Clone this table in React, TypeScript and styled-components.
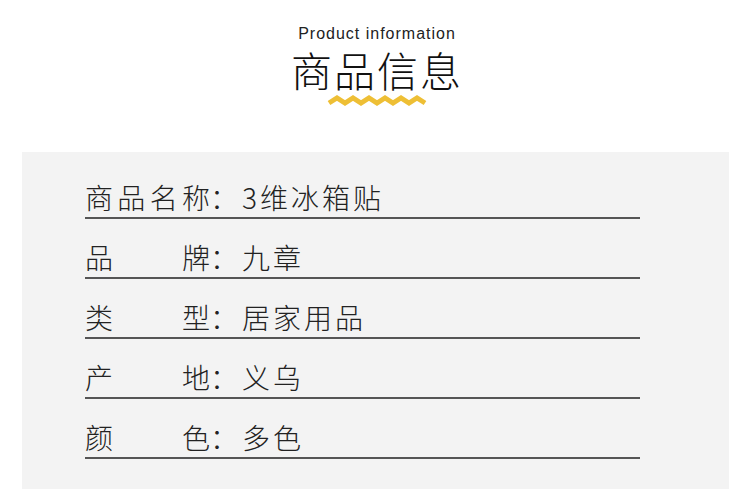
import React from "react";
import styled, { createGlobalStyle } from "styled-components";

const Global = createGlobalStyle`
  html, body { margin: 0; padding: 0; background: #fff; }
  body { font-family: "Noto Sans CJK SC", "Noto Sans", sans-serif; color: #222; }
`;

const Page = styled.div`
  width: 750px;
  height: 502px;
  overflow: hidden;
  display: flex;
  flex-direction: column;
`;

const Header = styled.header`
  display: flex;
  flex-direction: column;
  align-items: center;
  padding-top: 25px;
  padding-left: 4px;
  height: 152px;
  flex-shrink: 0;
  box-sizing: border-box;
`;

const Subtitle = styled.div`
  font-family: "Liberation Sans", Arial, sans-serif;
  font-size: 16px;
  letter-spacing: 1px;
  line-height: 18px;
  color: #222;
`;

const Title = styled.h1`
  margin: 4px 0 0;
  font-family: "Noto Sans CJK SC", sans-serif;
  font-weight: 300;
  font-size: 41px;
  line-height: 44px;
  letter-spacing: 2px;
  color: #111;
`;

const Zigzag = styled.svg`
  display: block;
  margin-top: 4px;
`;

const Panel = styled.section`
  margin: 0 21px 0 22px;
  height: 337px;
  background: #f3f3f3;
  padding: 7px 0 0 63px;
  box-sizing: border-box;
`;

const Row = styled.div`
  width: 555px;
  height: 60px;
  box-sizing: border-box;
  padding: 24px 0 6px;
  border-bottom: 2px solid #555;
  display: flex;
  align-items: flex-end;
  font-size: 28px;
  line-height: 28px;
  font-weight: 300;
  color: #222;
`;

const Label = styled.span`
  width: 125px;
  display: flex;
  justify-content: space-between;
`;

const Colon = styled.span`
  width: 32px;
`;

const Value = styled.span`
  letter-spacing: 3px;
`;

const rows: { label: string; value: string }[] = [
  { label: "商品名称", value: "3维冰箱贴" },
  { label: "品牌", value: "九章" },
  { label: "类型", value: "居家用品" },
  { label: "产地", value: "义乌" },
  { label: "颜色", value: "多色" },
];

export default function App() {
  return (
    <Page>
      <Global />
      <Header>
        <Subtitle>Product information</Subtitle>
        <Title>商品信息</Title>
        <Zigzag width="100" height="12" viewBox="0 0 100 12">
          <polyline
            points="2,8 10,3 18,8 26,3 34,8 42,3 50,8 58,3 66,8 74,3 82,8 90,3 98,8"
            fill="none"
            stroke="#eebf35"
            strokeWidth="5"
            strokeLinejoin="miter"
          />
        </Zigzag>
      </Header>
      <Panel>
        {rows.map((r) => (
          <Row key={r.label}>
            <Label>
              {r.label.split("").map((c, i) => (
                <span key={i}>{c}</span>
              ))}
            </Label>
            <Colon>：</Colon>
            <Value>{r.value}</Value>
          </Row>
        ))}
      </Panel>
    </Page>
  );
}
